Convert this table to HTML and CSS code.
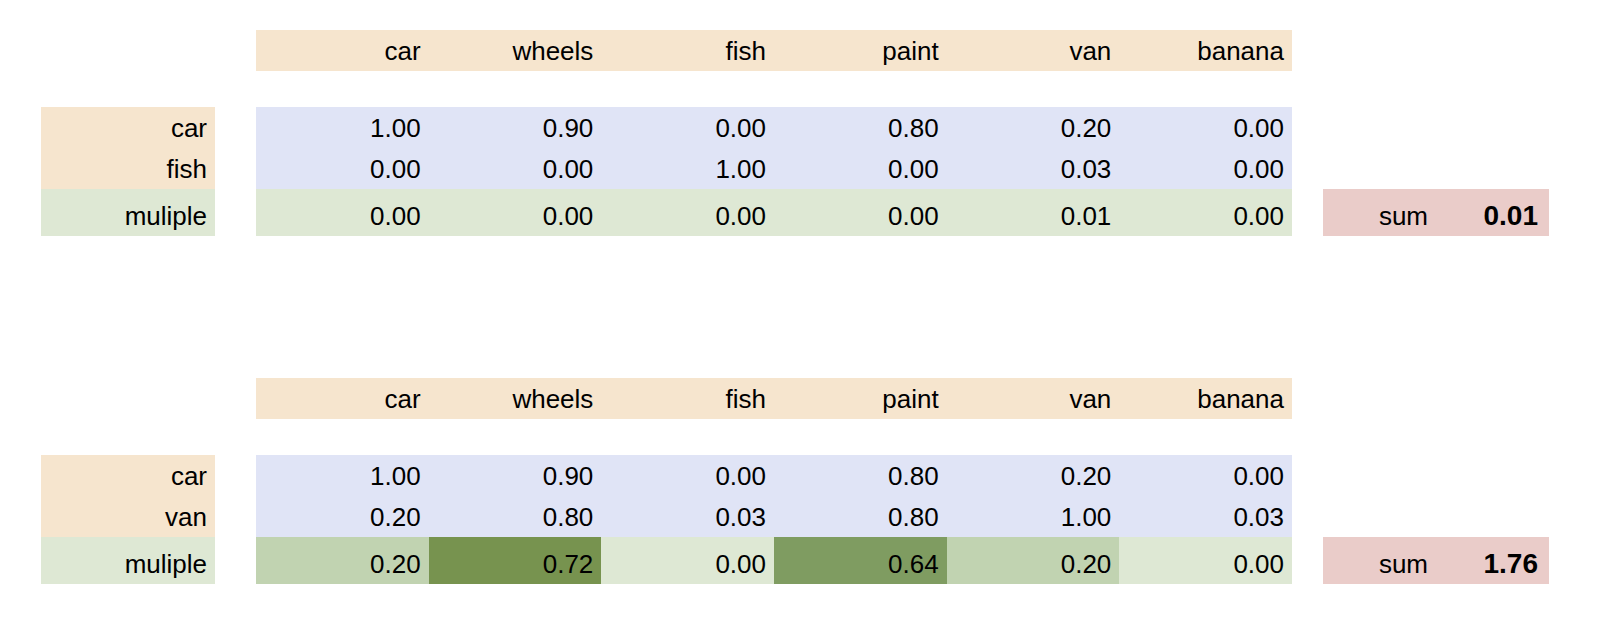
FILE: index.html
```html
<!DOCTYPE html>
<html>
<head>
<meta charset="utf-8">
<link rel="stylesheet" href="styles.css">
</head>
<body>
<main class="sheet">
  <section class="block block-first">
    <div class="head-row">
      <div class="cell">car</div><div class="cell">wheels</div><div class="cell">fish</div><div class="cell">paint</div><div class="cell">van</div><div class="cell">banana</div>
    </div>
    <div class="body">
      <div class="labels">
        <div class="cell row tan">car</div>
        <div class="cell row tan">fish</div>
        <div class="cell row-mult green">muliple</div>
      </div>
      <div class="matrix">
        <div class="mrow blue">
          <div class="cell row">1.00</div><div class="cell row">0.90</div><div class="cell row">0.00</div><div class="cell row">0.80</div><div class="cell row">0.20</div><div class="cell row">0.00</div>
        </div>
        <div class="mrow blue">
          <div class="cell row">0.00</div><div class="cell row">0.00</div><div class="cell row">1.00</div><div class="cell row">0.00</div><div class="cell row">0.03</div><div class="cell row">0.00</div>
        </div>
        <div class="mrow green">
          <div class="cell row-mult">0.00</div><div class="cell row-mult">0.00</div><div class="cell row-mult">0.00</div><div class="cell row-mult">0.00</div><div class="cell row-mult">0.01</div><div class="cell row-mult">0.00</div>
        </div>
      </div>
      <div class="sum">
        <div class="cell row-mult">sum</div><div class="cell row-mult total">0.01</div>
      </div>
    </div>
  </section>

  <section class="block block-second">
    <div class="head-row">
      <div class="cell">car</div><div class="cell">wheels</div><div class="cell">fish</div><div class="cell">paint</div><div class="cell">van</div><div class="cell">banana</div>
    </div>
    <div class="body">
      <div class="labels">
        <div class="cell row tan">car</div>
        <div class="cell row tan">van</div>
        <div class="cell row-mult green">muliple</div>
      </div>
      <div class="matrix">
        <div class="mrow blue">
          <div class="cell row">1.00</div><div class="cell row">0.90</div><div class="cell row">0.00</div><div class="cell row">0.80</div><div class="cell row">0.20</div><div class="cell row">0.00</div>
        </div>
        <div class="mrow blue">
          <div class="cell row">0.20</div><div class="cell row">0.80</div><div class="cell row">0.03</div><div class="cell row">0.80</div><div class="cell row">1.00</div><div class="cell row">0.03</div>
        </div>
        <div class="mrow green">
          <div class="cell row-mult heat-low">0.20</div><div class="cell row-mult heat-high">0.72</div><div class="cell row-mult">0.00</div><div class="cell row-mult heat-mid">0.64</div><div class="cell row-mult heat-low">0.20</div><div class="cell row-mult">0.00</div>
        </div>
      </div>
      <div class="sum">
        <div class="cell row-mult">sum</div><div class="cell row-mult total">1.76</div>
      </div>
    </div>
  </section>
</main>
</body>
</html>
```
FILE: styles.css
```css
html, body {
  margin: 0;
  padding: 0;
  background: #ffffff;
}

body {
  width: 1600px;
  height: 629px;
  overflow: hidden;
  font-family: "Liberation Sans", Arial, Helvetica, sans-serif;
  font-size: 26px;
  color: #000000;
}

.sheet {
  padding-left: 41px;
}

.block-first {
  padding-top: 30px;
}

.block-second {
  margin-top: 142px;
}

.head-row {
  margin-left: 215px;
  width: 1036px;
  height: 41px;
  display: grid;
  grid-template-columns: repeat(6, 1fr);
  background: #f6e5ce;
}

.body {
  display: flex;
  margin-top: 36px;
}

.labels {
  width: 174px;
  margin-right: 41px;
  display: flex;
  flex-direction: column;
}

.matrix {
  width: 1036px;
  margin-right: 31px;
  display: flex;
  flex-direction: column;
}

.mrow {
  display: grid;
  grid-template-columns: repeat(6, 1fr);
}

.sum {
  align-self: flex-end;
  width: 226px;
  display: grid;
  grid-template-columns: 1fr 1fr;
  background: #eaccc9;
}

.cell {
  display: flex;
  align-items: flex-end;
  justify-content: flex-end;
  line-height: 26px;
  padding: 0 8px 7px 0;
  box-sizing: border-box;
  white-space: nowrap;
  height: 41px;
}

.row {
  height: 41px;
}

.row-mult {
  height: 47px;
}

.total {
  font-weight: bold;
  font-size: 28px;
  padding-right: 11px;
}

.tan {
  background: #f6e5ce;
}

.blue {
  background: #e0e4f6;
}

.green {
  background: #dee8d4;
}

.heat-low {
  background: #c1d3b1;
}

.heat-mid {
  background: #7f9c61;
}

.heat-high {
  background: #77934f;
}
```
